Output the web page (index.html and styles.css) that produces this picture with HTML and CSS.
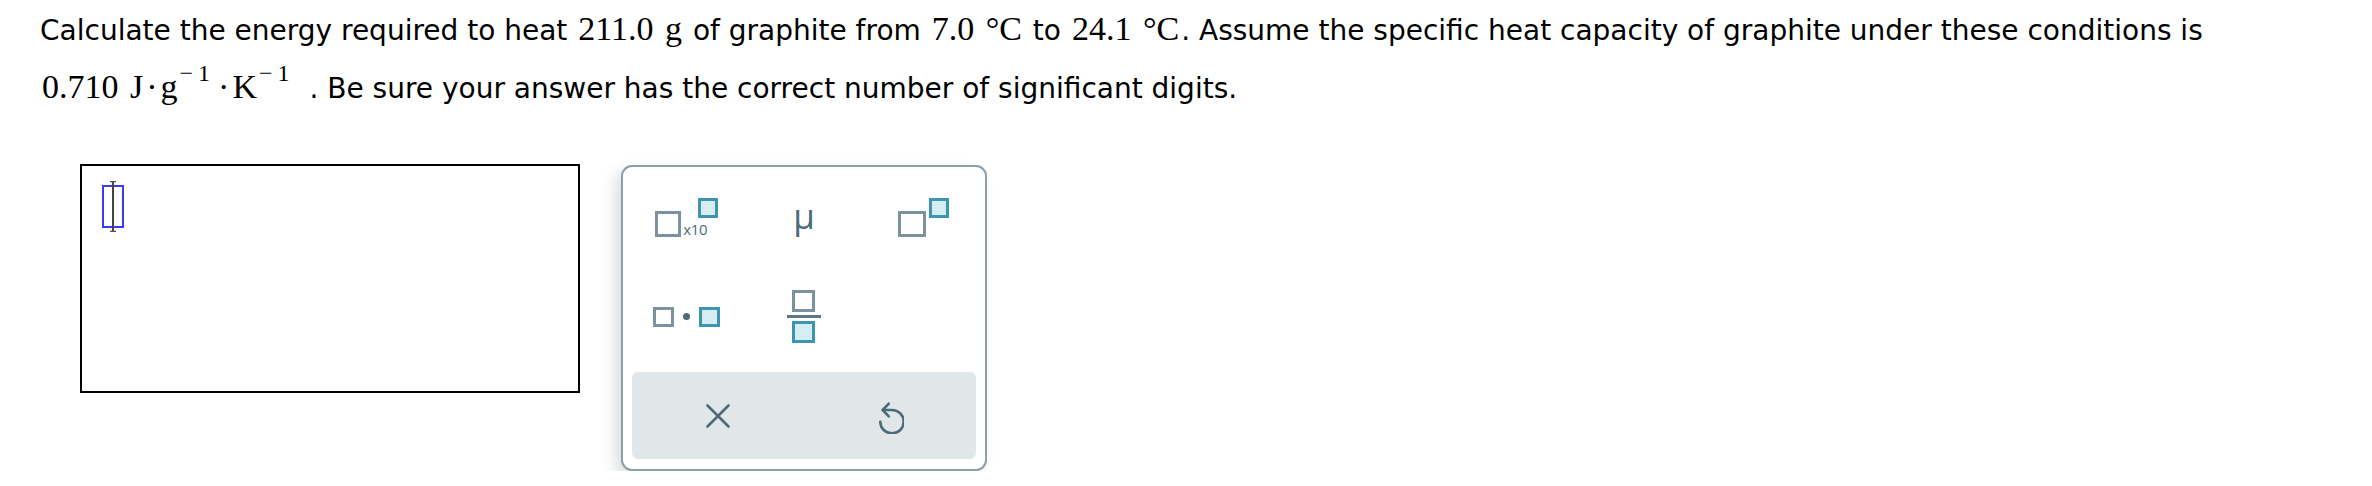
FILE: index.html
```html
<!DOCTYPE html>
<html>
<head>
<meta charset="utf-8">
<link rel="stylesheet" href="styles.css">
</head>
<body>
<div class="page">
  <p class="question">Calculate the energy required to heat <span class="m">211.0 g</span> of graphite from <span class="m">7.0 °C</span> to <span class="m">24.1 °C</span>. Assume the specific heat capacity of graphite under these conditions is <span class="m m-unit">0.710 J<span class="op">·</span>g<span class="sup">−1</span><span class="op">·</span>K<span class="sup">−1</span></span> . Be sure your answer has the correct number of significant digits.</p>

  <div class="answer-row">
    <div class="answer-box">
      <svg class="cursor" width="22" height="51" viewBox="0 0 22 51">
        <rect x="1" y="5" width="20" height="41" fill="none" stroke="#3b3bf5" stroke-width="2"/>
        <line x1="11" y1="1" x2="11" y2="50" stroke="#444" stroke-width="2"/>
        <path d="M8 0.5 L14 0.5 M8 50.5 L14 50.5" stroke="#555" stroke-width="1.5"/>
      </svg>
    </div>

    <div class="palette">
      <div class="grid">
        <div class="cell c1">
          <div class="ico-x10">
            <span class="sq gray big"></span>
            <span class="x10">x10</span>
            <span class="sq blue up"></span>
          </div>
        </div>
        <div class="cell c2"><span class="mu">μ</span></div>
        <div class="cell c3">
          <div class="ico-pow">
            <span class="sq gray pow"></span>
            <span class="sq blue up"></span>
          </div>
        </div>
        <div class="cell c1">
          <div class="ico-dot">
            <span class="sq gray small"></span>
            <span class="dot"></span>
            <span class="sq blue small"></span>
          </div>
        </div>
        <div class="cell c2">
          <div class="ico-frac">
            <span class="sq gray fr"></span>
            <span class="bar"></span>
            <span class="sq blue fr"></span>
          </div>
        </div>
        <div class="cell c3"></div>
      </div>
      <div class="actions">
        <div class="act">
          <svg width="24" height="24" viewBox="0 0 24 24">
            <path d="M1.5 1.5 L22.5 22.5 M22.5 1.5 L1.5 22.5" stroke="#4b6b78" stroke-width="2.6" stroke-linecap="round"/>
          </svg>
        </div>
        <div class="act">
          <svg width="28" height="36" viewBox="0 0 28 36">
            <path d="M6.7 12 L16 12 A11.7 11.7 0 1 1 4.3 23.7" fill="none" stroke="#4b6b78" stroke-width="2.6" stroke-linecap="round"/>
            <path d="M12.8 5.6 L6.7 12 L12.8 18.4" fill="none" stroke="#4b6b78" stroke-width="2.6" stroke-linecap="round" stroke-linejoin="round"/>
          </svg>
        </div>
      </div>
    </div>
  </div>
</div>
</body>
</html>
```

FILE: styles.css
```css
html, body {
  margin: 0;
  padding: 0;
  background: #ffffff;
}

.page {
  padding: 2px 0 0 40px;
}

.question {
  margin: 0;
  width: 2300px;
  font-family: "DejaVu Sans", Verdana, sans-serif;
  font-size: 28px;
  line-height: 58px;
  color: #000;
}

.m {
  font-family: "Liberation Serif", "Times New Roman", serif;
  font-size: 34px;
  line-height: 1;
  white-space: nowrap;
  word-spacing: 3px;
  margin: 0 2px;
}

.m-unit {
  margin: 0 6px 0 2px;
}

.op {
  margin: 0 3px;
}

.sup {
  font-size: 24px;
  line-height: 1;
  vertical-align: 17px;
  margin-left: 2px;
  letter-spacing: 5px;
}

.answer-row {
  display: flex;
  align-items: flex-start;
  gap: 41px;
  margin: 46px 0 0 40px;
}

.answer-box {
  box-sizing: border-box;
  width: 500px;
  height: 229px;
  border: 2px solid #000;
  padding: 15px 0 0 20px;
}

.cursor {
  display: block;
}

.palette {
  box-sizing: border-box;
  width: 366px;
  margin-top: 1px;
  border: 2px solid #8c9fa9;
  border-radius: 11px;
  padding: 1px 9px 10px 9px;
  background: #fff;
  box-shadow: -6px 6px 14px rgba(40, 60, 70, 0.16);
}

.grid {
  display: grid;
  grid-template-columns: repeat(3, 1fr);
  grid-template-rows: 99px 99px;
}

.cell {
  display: flex;
  align-items: center;
  justify-content: center;
}

.cell.c1 {
  padding-right: 5px;
}

.cell.c3 {
  padding-left: 10px;
}

.sq {
  box-sizing: border-box;
  display: block;
  flex: none;
}

.sq.gray {
  border: 3px solid #7b939e;
  background: #fff;
}

.sq.blue {
  border: 3px solid #3d96b1;
  background: #d6eef3;
}

.sq.big {
  width: 26px;
  height: 26px;
}

.sq.up {
  width: 20px;
  height: 20px;
  align-self: flex-start;
}

.ico-x10 {
  display: flex;
  align-items: flex-end;
  height: 39px;
}

.x10 {
  font-family: "Open Sans", "DejaVu Sans", sans-serif;
  font-size: 15px;
  line-height: 15px;
  color: #4b6b78;
  margin-left: 2px;
  letter-spacing: -0.3px;
}

.ico-x10 .sq.up {
  margin-left: -9px;
}

.mu {
  font-family: "Open Sans", "DejaVu Sans", sans-serif;
  font-weight: 400;
  font-size: 35px;
  line-height: 36px;
  color: #4b6b78;
  margin-top: -4px;
}

.ico-pow {
  display: flex;
  align-items: flex-end;
  height: 39px;
  gap: 3px;
}

.sq.pow {
  width: 28px;
  height: 26px;
}

.ico-dot {
  display: flex;
  align-items: center;
  gap: 9px;
}

.sq.small {
  width: 21px;
  height: 20px;
}

.dot {
  display: block;
  width: 7px;
  height: 7px;
  border-radius: 50%;
  background: #4b6b78;
}

.ico-frac {
  display: flex;
  flex-direction: column;
  align-items: center;
  gap: 3px;
}

.sq.fr {
  width: 23px;
  height: 22px;
}

.bar {
  display: block;
  width: 34px;
  height: 3px;
  background: #5b7784;
}

.actions {
  display: flex;
  margin-top: 6px;
  height: 87px;
  background: #e1e6e9;
  border-radius: 6px;
}

.act {
  flex: 1;
  display: flex;
  align-items: center;
  justify-content: center;
}
```
